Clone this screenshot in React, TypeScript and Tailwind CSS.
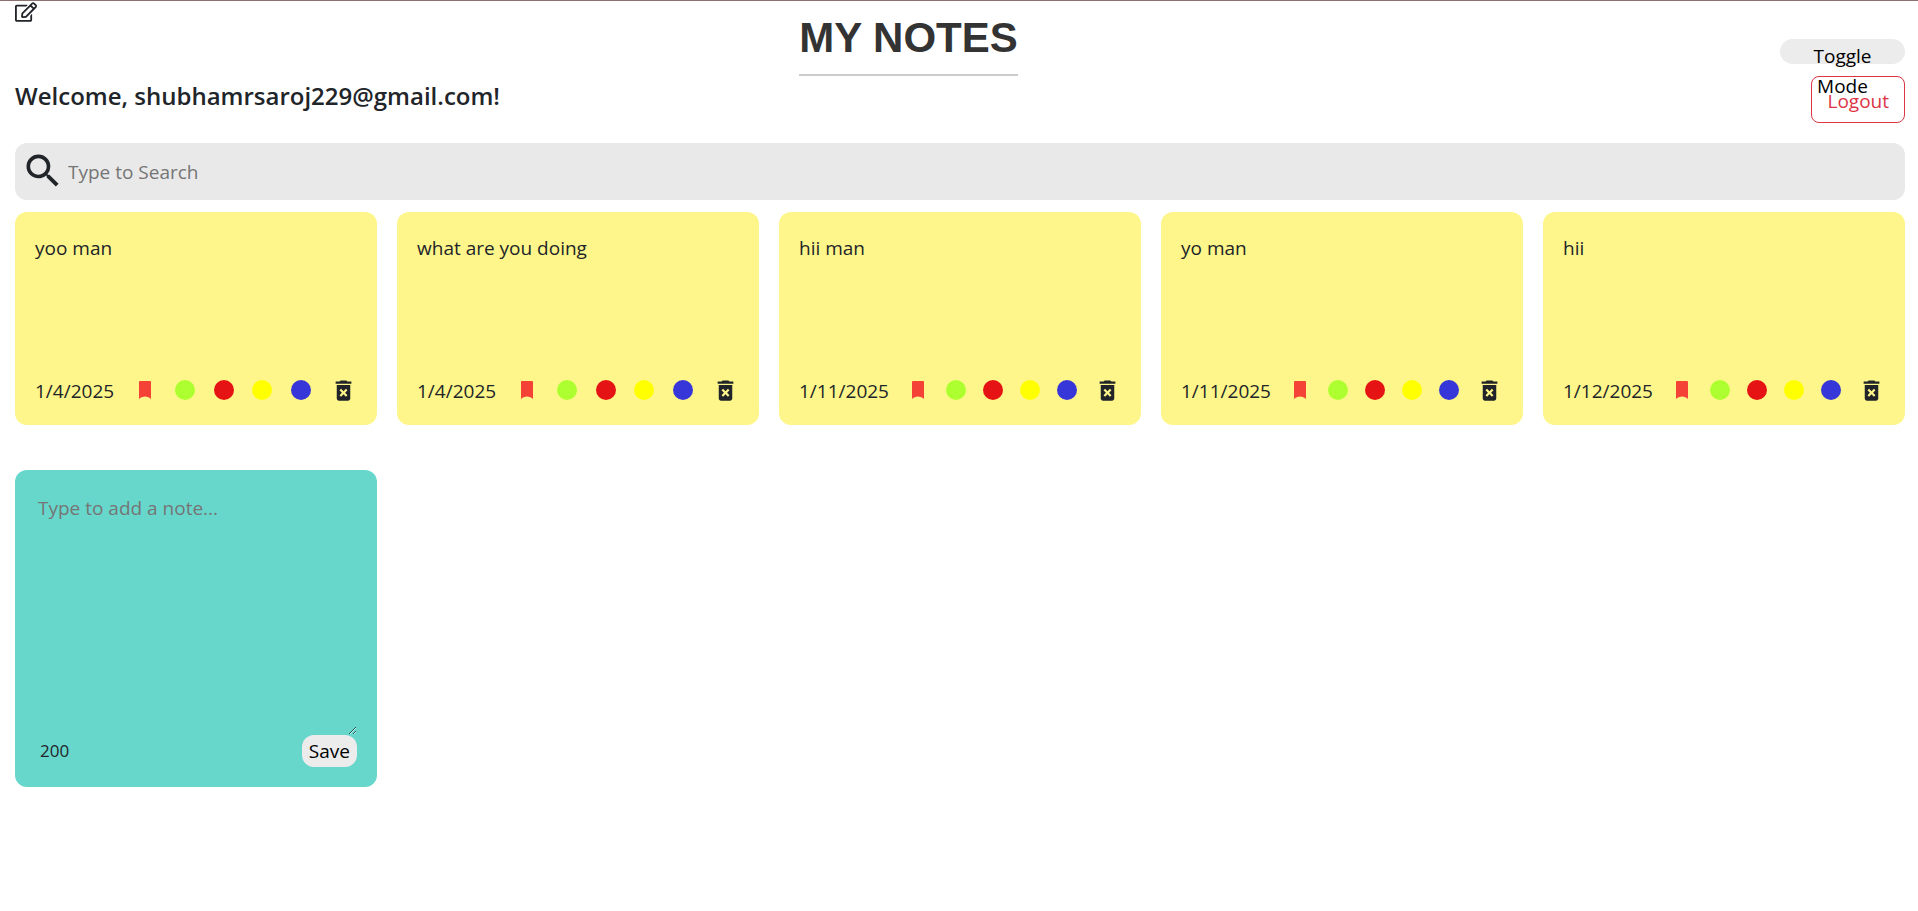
import React, { useState } from "react";
import { FaRegEdit } from "react-icons/fa";
import { MdDeleteForever, MdSearch } from "react-icons/md";

const CHARACTER_LIMIT = 200;

const notes = [
  { text: "yoo man", date: "1/4/2025" },
  { text: "what are you doing", date: "1/4/2025" },
  { text: "hii man", date: "1/11/2025" },
  { text: "yo man", date: "1/11/2025" },
  { text: "hii", date: "1/12/2025" },
];

const swatches = [
  { name: "green", fill: "bg-[#adff2f]" },
  { name: "red", fill: "bg-[#e51313]" },
  { name: "yellow", fill: "bg-[#ffff00]" },
  { name: "blue", fill: "bg-[#3636d9]" },
];

function BookmarkIcon() {
  return (
    <svg width="22" height="22" viewBox="0 0 22 22" fill="currentColor" aria-hidden="true">
      <path d="M6.2 2h9.6c.7 0 1.200.5 1.200 1.200V20c-1-.8-2.200-1.400-3.400-1.900-1.600-.8-3.600-.8-5.200 0C7.200 18.600 6 19.200 5 20V3.200C5 2.500 5.500 2 6.200 2z" />
    </svg>
  );
}

function Header() {
  return (
    <header>
      <div className="flex items-start justify-between">
        <FaRegEdit size={22} />
        <h1 className="border-b-2 border-[#ccc] pt-3 pb-3 font-['Liberation_Sans',Arial,sans-serif] text-[42px] leading-[49px] font-bold text-[#333]">
          MY NOTES
        </h1>
        <button
          type="button"
          className="mt-[38px] h-[25px] w-[125px] rounded-full bg-[#ececec] px-8 pt-[2px] leading-[30px] text-black"
        >
          Toggle Mode
        </button>
      </div>
      <div className="flex items-start justify-between">
        <h2 className="pt-[2px] text-2xl leading-9 font-semibold">Welcome, shubhamrsaroj229@gmail.com!</h2>
        <button
          type="button"
          className="h-[47px] rounded-lg border border-[#dc3545] px-[15px] pt-1 text-[#dc3545]"
        >
          Logout
        </button>
      </div>
    </header>
  );
}

function SearchBar() {
  return (
    <div className="mt-5 flex items-center rounded-xl bg-[#e9e9e9] px-[6px] pt-[5px] pb-[7px]">
      <label htmlFor="search" aria-label="Search notes">
        <MdSearch size={44} />
      </label>
      <input
        id="search"
        type="text"
        placeholder="Type to Search"
        className="h-[45px] min-w-0 flex-1 bg-transparent pt-[2px] pl-[3px] outline-none placeholder:text-[#757575]"
      />
    </div>
  );
}

function Note({ text, date }: { text: string; date: string }) {
  return (
    <article className="flex min-h-[213px] flex-col justify-between rounded-xl bg-[#fef68a] px-5 pt-5 pb-[19px]">
      <p className="leading-8">{text}</p>
      <footer className="flex items-center justify-between">
        <time className="pt-[2px] pr-px leading-[30px]">{date}</time>
        <button type="button" aria-label="Bookmark note" className="text-[#f44336]">
          <BookmarkIcon />
        </button>
        {swatches.map((s) => (
          <button
            key={s.name}
            type="button"
            aria-label={`Color note ${s.name}`}
            className={`size-5 rounded-full ${s.fill}`}
          />
        ))}
        <button type="button" aria-label="Delete note">
          <MdDeleteForever size={27} />
        </button>
      </footer>
    </article>
  );
}

function AddNote() {
  const [value, setValue] = useState("");

  return (
    <form
      className="mt-[25px] flex min-h-[317px] flex-col rounded-xl bg-[#67d7cc] px-5 py-5"
      onSubmit={(e) => e.preventDefault()}
    >
      <textarea
        aria-label="New note"
        rows={8}
        maxLength={CHARACTER_LIMIT}
        value={value}
        onChange={(e) => setValue(e.target.value)}
        placeholder="Type to add a note..."
        className="block w-full flex-1 resize bg-transparent px-[3px] pt-1 leading-7 outline-none placeholder:text-[#757575]"
      />
      <div className="flex items-center justify-between">
        <small className="pl-[5px] text-[17px] leading-6">{CHARACTER_LIMIT - value.length}</small>
        <button type="submit" className="h-8 rounded-xl bg-[#ececec] px-[7px] pt-px text-black">
          Save
        </button>
      </div>
    </form>
  );
}

export default function App() {
  return (
    <div className="border-t border-[#8b7070] bg-white pr-[13px] pl-[15px] font-['Open_Sans',sans-serif] text-[19px] text-[#212529]">
      <Header />
      <SearchBar />
      <main className="mt-3 grid grid-cols-5 gap-5">
        {notes.map((note, i) => (
          <Note key={i} {...note} />
        ))}
        <AddNote />
      </main>
    </div>
  );
}
